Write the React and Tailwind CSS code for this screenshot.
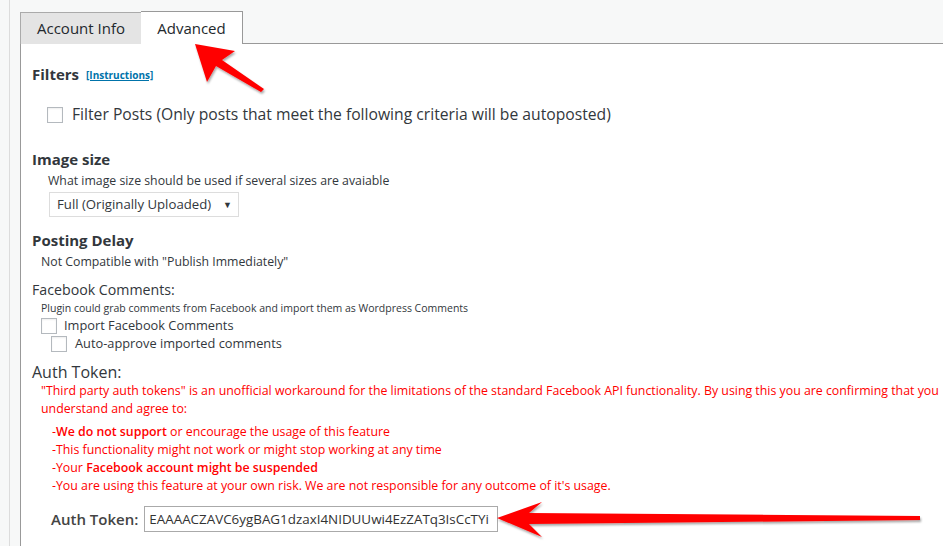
import React from "react"

const font = "font-['Open_Sans',_'Noto_Sans',_sans-serif]"

function Checkbox({ className = "" }) {
  return (
    <span
      className={`inline-block h-[16px] w-[16px] shrink-0 border border-[#b4b9be] bg-white shadow-[inset_0_1px_2px_rgba(0,0,0,0.07)] ${className}`}
    />
  )
}

function Arrows() {
  return (
    <svg className="pointer-events-none absolute left-0 top-0" width="943" height="546" viewBox="0 0 943 546">
      <defs>
        <filter id="sh" x="-10%" y="-30%" width="120%" height="160%">
          <feDropShadow dx="1" dy="2" stdDeviation="1.2" floodColor="#000" floodOpacity="0.35" />
        </filter>
      </defs>
      {/* small arrow pointing at the Advanced tab */}
      <polygon
        filter="url(#sh)"
        fill="#f00"
        points="195,44 235,51 222,60 264,89 261,92 216,66 207,82"
      />
      {/* long arrow pointing at the token field */}
      <polygon
        filter="url(#sh)"
        fill="#f00"
        points="497,518 542,502 529,513 920,516 920,520 529,524 542,537"
      />
    </svg>
  )
}

export default function App() {
  return (
    <div className={`relative flex h-[546px] w-[943px] overflow-hidden bg-[#f7f8f8] ${font}`}>
      <div className="ml-[9px] flex flex-1 flex-col border-l border-[#dcdcdc] pl-[10px] pt-[11px]">
        <div className="flex items-end">
          <div className="flex h-[32px] w-[122px] items-center justify-center border border-b-0 border-[#aaa] bg-[#e4e4e4] text-[15px] text-[#23282d]">
            Account Info
          </div>
          <div className="-ml-px flex h-[33px] w-[102px] items-center justify-center border border-b-0 border-l-0 border-[#999] bg-white text-[15px] text-[#23282d]">
            Advanced
          </div>
          <div className="flex-1 border-b border-[#999]" />
        </div>

        <div className="flex flex-1 flex-col border-l border-[#999] bg-white pl-[11px] text-[#32373c]">
          <div className="mt-[20px] flex h-[20px] items-center gap-[7px]">
            <span className="text-[15px] font-bold">Filters</span>
            <span className="pt-[2px] text-[10px] font-bold text-[#0073aa] underline">[Instructions]</span>
          </div>

          <label className="mt-[21px] ml-[15px] flex h-[20px] items-center gap-[9px] text-[15.7px]">
            <Checkbox />
            Filter Posts (Only posts that meet the following criteria will be autoposted)
          </label>

          <div className="mt-[24px] h-[20px] text-[15px] font-bold leading-[20px]">Image size</div>
          <div className="mt-[4px] ml-[16px] h-[16px] text-[12.3px] leading-[16px]">
            What image size should be used if several sizes are avaiable
          </div>
          <div className="mt-[3px] ml-[17px] flex h-[25px] w-[190px] items-center justify-between border border-[#ddd] bg-white pl-[7px] pr-[6px] text-[13.2px]">
            <span>Full (Originally Uploaded)</span>
            <span className="text-[9px]">▼</span>
          </div>

          <div className="mt-[13px] h-[20px] text-[15px] font-bold leading-[20px]">Posting Delay</div>
          <div className="mt-[4px] ml-[9px] h-[16px] text-[12.3px] leading-[16px]">
            Not Compatible with "Publish Immediately"
          </div>

          <div className="mt-[10px] h-[20px] text-[14.2px] leading-[20px]">Facebook Comments:</div>
          <div className="mt-[1px] ml-[9px] h-[14px] text-[10.5px] leading-[14px]">
            Plugin could grab comments from Facebook and import them as Wordpress Comments
          </div>
          <label className="mt-[2px] ml-[9px] flex h-[18px] items-center gap-[7px] text-[12.8px]">
            <Checkbox />
            Import Facebook Comments
          </label>
          <label className="ml-[19px] flex h-[18px] items-center gap-[8px] text-[12.8px]">
            <Checkbox />
            Auto-approve imported comments
          </label>

          <div className="mt-[9px] h-[20px] text-[16px] leading-[20px]">Auth Token:</div>
          <div className="ml-[9px] text-[12.35px] leading-[18px] text-[#f00]">
            <div className="whitespace-nowrap">
              "Third party auth tokens" is an unofficial workaround for the limitations of the standard Facebook API functionality. By using this you are confirming that you
            </div>
            <div>understand and agree to:</div>
          </div>
          <div className="mt-[5px] ml-[20px] text-[12.35px] leading-[18px] text-[#f00]">
            <div>
              -<span className="font-semibold">We do not support</span> or encourage the usage of this feature
            </div>
            <div>-This functionality might not work or might stop working at any time</div>
            <div>
              -Your <span className="font-semibold">Facebook account might be suspended</span>
            </div>
            <div>-You are using this feature at your own risk. We are not responsible for any outcome of it's usage.</div>
          </div>

          <div className="mt-[11px] ml-[19px] flex items-center gap-[6px]">
            <span className="text-[15px] font-semibold text-[#444]">Auth Token:</span>
            <div className="flex h-[26px] w-[354px] items-center overflow-hidden border border-[#aaa] bg-white px-[4px] text-[13.4px] whitespace-nowrap text-[#333]">
              EAAAACZAVC6ygBAG1dzaxI4NIDUUwi4EzZATq3IsCcTYi
            </div>
          </div>
        </div>
      </div>
      <Arrows />
    </div>
  )
}
